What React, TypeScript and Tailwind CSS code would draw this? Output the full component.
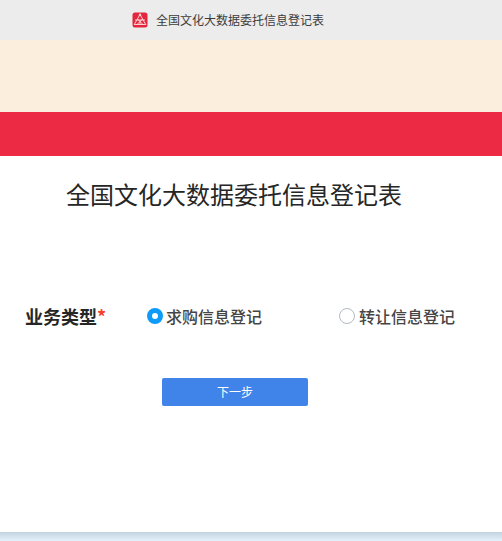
import React from 'react';

const cjk = { fontFamily: '"Noto Sans CJK SC", "Liberation Sans", sans-serif' };

const Logo = () => (
  <svg width="16" height="16" viewBox="0 0 16 16" className="shrink-0">
    <rect x="0.5" y="0.5" width="15" height="15" rx="2.5" fill="#e3263d" />
    <path d="M8 2.5 L14 13 M8 2.5 L2 13 M2.5 12.5 H13.5 M3 8 H13 M4.5 13 L10.5 7 M11.5 13 L5.5 7 M8 8 V13" stroke="#fbdede" strokeWidth="0.9" fill="none" />
    <path d="M8 1 L9.6 3.6 H6.4 Z" fill="#fbdede" />
  </svg>
);

const Radio: React.FC<{ label: string; checked?: boolean }> = ({ label, checked }) => (
  <label className={`flex items-center text-base leading-6 font-medium text-[#454545] ${checked ? 'gap-[3px]' : 'gap-1'}`}>
    {checked ? (
      <span className="w-4 h-4 rounded-full border-[5px] border-[#0d9bf7] bg-white" />
    ) : (
      <span className="w-4 h-4 rounded-full border border-[#b4bac4] bg-white" />
    )}
    <span>{label}</span>
  </label>
);

export default function App() {
  return (
    <div className="h-[541px] w-full overflow-hidden flex flex-col" style={cjk}>
      <div className="h-10 bg-[#ececec] flex items-center pl-[132px] gap-2 shrink-0">
        <Logo />
        <span className="text-xs text-[#3c3c3c]">全国文化大数据委托信息登记表</span>
      </div>
      <div className="h-[72px] bg-[#fbeedc] shrink-0" />
      <div className="h-11 bg-[#ec2a44] shrink-0" />
      <main className="h-[376px] bg-white shrink-0 flex flex-col">
        <h1 className="pl-[66px] pt-[22px] text-2xl leading-8 font-normal text-[#262626]">全国文化大数据委托信息登记表</h1>
        <div className="flex items-center mt-[94px] pl-[25px] h-6">
          <span className="w-[122px] text-lg leading-6 font-bold text-[#262626]">
            业务类型<span className="text-[#f5402c]">*</span>
          </span>
          <div className="w-[192px]">
            <Radio label="求购信息登记" checked />
          </div>
          <Radio label="转让信息登记" />
        </div>
        <div className="mt-[50px] pl-[162px]">
          <button className="w-[146px] h-7 rounded-[2px] bg-[#4084ea] text-xs text-white">下一步</button>
        </div>
      </main>
      <div className="flex-1 bg-gradient-to-b from-[#c3d3df] to-[#e3f1fc]" />
    </div>
  );
}
